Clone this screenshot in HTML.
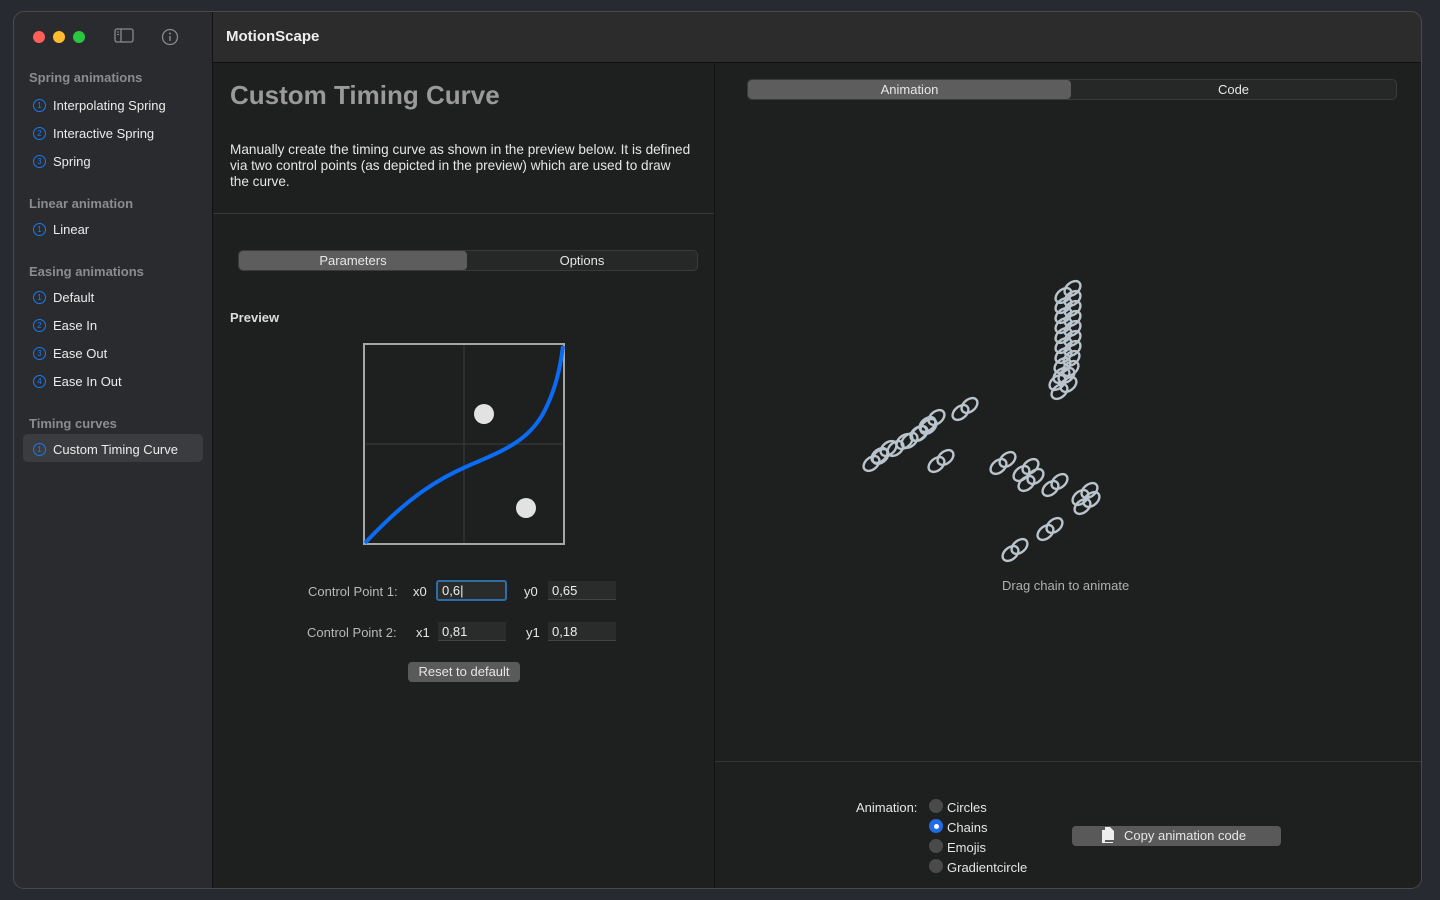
<!DOCTYPE html>
<html><head><meta charset="utf-8"><style>
*{margin:0;padding:0;box-sizing:border-box}
body{width:1440px;height:900px;background:#272a30;font-family:"Liberation Sans",sans-serif;position:relative;overflow:hidden;color:#e6e6e6}
.a{position:absolute}
.win{left:13px;top:11px;width:1409px;height:878px;border-radius:11px;overflow:hidden;background:#1e1f1f}
.frame{left:13px;top:11px;width:1409px;height:878px;border-radius:11px;border:1px solid #4a4a4a;pointer-events:none}
.side{left:0;top:0;width:200px;height:878px;background:#2a2b2e;border-right:1px solid #111}
.tb{left:200px;top:0;width:1209px;height:52px;background:#2c2c2c;border-bottom:1px solid #111}
.hd{font-size:13px;font-weight:bold;color:#8c8c8e;left:16px}
.it{font-size:13px;color:#ececec;left:40px}
.num{position:absolute;left:-20px;top:1px;width:13px;height:13px;border:1.3px solid #1a7bf0;border-radius:50%;font-size:8px;color:#1a7bf0;text-align:center;line-height:11px}
.seg{border:1px solid #3a3a3a;border-radius:5px;background:#262727;height:21px}
.seg .on{position:absolute;left:0;top:0;height:19px;background:#5d5d5d;border-radius:4px}
.lbl{font-size:13px;color:#e6e6e6;text-align:center;position:absolute;top:2px}
.inp{background:#2a2b2b;border-bottom:1px solid #444;height:19px;font-size:13px;padding-left:4px;line-height:19px;color:#eee}
.rad{width:14px;height:14px;border-radius:50%;background:#4a4a4a}
</style></head><body>
<div class="a win">
 <div class="a side">
  <div class="a" style="left:20px;top:20px;width:12px;height:12px;border-radius:50%;background:#fe5f57"></div>
  <div class="a" style="left:40px;top:20px;width:12px;height:12px;border-radius:50%;background:#febc2e"></div>
  <div class="a" style="left:60px;top:20px;width:12px;height:12px;border-radius:50%;background:#28c840"></div>
  <svg class="a" style="left:101px;top:17px" width="20" height="16"><rect x="1" y="1" width="18" height="13" rx="2" fill="none" stroke="#8a8a8a" stroke-width="1.3"/><line x1="7" y1="1" x2="7" y2="14" stroke="#8a8a8a" stroke-width="1.3"/><line x1="3" y1="4" x2="5" y2="4" stroke="#8a8a8a"/><line x1="3" y1="6.5" x2="5" y2="6.5" stroke="#8a8a8a"/></svg>
  <svg class="a" style="left:148px;top:17px" width="18" height="18"><circle cx="9" cy="9" r="7.5" fill="none" stroke="#8a8a8a" stroke-width="1.3"/><circle cx="9" cy="5.5" r="1" fill="#8a8a8a"/><line x1="9" y1="8" x2="9" y2="13" stroke="#8a8a8a" stroke-width="1.4"/></svg>
  <div class="a hd" style="top:59px">Spring animations</div>
  <div class="a it" style="top:87px"><span class="num">1</span>Interpolating Spring</div>
  <div class="a it" style="top:115px"><span class="num">2</span>Interactive Spring</div>
  <div class="a it" style="top:143px"><span class="num">3</span>Spring</div>
  <div class="a hd" style="top:185px">Linear animation</div>
  <div class="a it" style="top:211px"><span class="num">1</span>Linear</div>
  <div class="a hd" style="top:253px">Easing animations</div>
  <div class="a it" style="top:279px"><span class="num">1</span>Default</div>
  <div class="a it" style="top:307px"><span class="num">2</span>Ease In</div>
  <div class="a it" style="top:335px"><span class="num">3</span>Ease Out</div>
  <div class="a it" style="top:363px"><span class="num">4</span>Ease In Out</div>
  <div class="a hd" style="top:405px">Timing curves</div>
  <div class="a" style="left:10px;top:423px;width:180px;height:28px;border-radius:5px;background:#3b3c3f"></div>
  <div class="a it" style="top:431px"><span class="num">1</span>Custom Timing Curve</div>
 </div>
 <div class="a tb"><div class="a" style="left:13px;top:17px;font-size:15px;font-weight:bold;color:#eee">MotionScape</div></div>
 <div class="a" style="left:217px;top:69px;font-size:26px;font-weight:bold;color:#9a9a9a">Custom Timing Curve</div>
 <div class="a" style="left:217px;top:131px;width:480px;font-size:13.6px;line-height:16px;color:#e6e6e6;white-space:nowrap">Manually create the timing curve as shown in the preview below. It is defined<br>via two control points (as depicted in the preview) which are used to draw<br>the curve.</div>
 <div class="a" style="left:200px;top:202px;width:501px;height:1px;background:#3a3a3a"></div>
 <div class="a" style="left:701px;top:52px;width:1px;height:826px;background:#111"></div>
 <div class="a seg" style="left:225px;top:239px;width:460px"><div class="on" style="width:228px"></div><div class="lbl" style="left:0;width:228px">Parameters</div><div class="lbl" style="left:228px;width:230px">Options</div></div>
 <div class="a" style="left:217px;top:299px;font-size:13px;font-weight:bold;color:#ddd">Preview</div>
 <svg class="a" style="left:350px;top:332px" width="204" height="204">
  <rect x="1" y="1" width="200" height="200" fill="#1e1f1f" stroke="#a6a6a6" stroke-width="2"/>
  <line x1="101" y1="2" x2="101" y2="200" stroke="#3c3c3c"/><line x1="2" y1="101" x2="200" y2="101" stroke="#3c3c3c"/>
  <path d="M2,200 C47,152 77,135 107,122 C142,107 167,97 182,67 C192,47 197,27 200,3" fill="none" stroke="#0a6cf5" stroke-width="4"/>
  <circle cx="121" cy="71" r="10" fill="#e2e2e2"/><circle cx="163" cy="165" r="10" fill="#e2e2e2"/>
 </svg>
 <div class="a" style="left:295px;top:573px;font-size:13px;color:#b8b8b8">Control Point 1:</div>
 <div class="a" style="left:400px;top:573px;font-size:13px">x0</div>
 <div class="a inp" style="left:423px;top:569px;width:71px;height:21px;border:2px solid #2c6ea8;border-radius:3px;line-height:17px">0,6|</div>
 <div class="a" style="left:511px;top:573px;font-size:13px">y0</div>
 <div class="a inp" style="left:535px;top:570px;width:68px">0,65</div>
 <div class="a" style="left:294px;top:614px;font-size:13px;color:#b8b8b8">Control Point 2:</div>
 <div class="a" style="left:403px;top:614px;font-size:13px">x1</div>
 <div class="a inp" style="left:425px;top:611px;width:68px">0,81</div>
 <div class="a" style="left:513px;top:614px;font-size:13px">y1</div>
 <div class="a inp" style="left:535px;top:611px;width:68px">0,18</div>
 <div class="a" style="left:395px;top:651px;width:112px;height:20px;background:#5a5a5a;border-radius:4px;font-size:13px;text-align:center;line-height:19px">Reset to default</div>
 <div class="a seg" style="left:734px;top:68px;width:650px"><div class="on" style="width:323px"></div><div class="lbl" style="left:0;width:323px">Animation</div><div class="lbl" style="left:323px;width:325px">Code</div></div>
 <svg class="a" style="left:0;top:0" width="1409" height="878">
  <defs><g id="lk" fill="none" stroke="#b9c4cc" stroke-width="2.4"><ellipse cx="-4.5" cy="3.5" rx="9" ry="6" transform="rotate(-40 -4.5 3.5)"/><ellipse cx="4.5" cy="-3.5" rx="9" ry="6" transform="rotate(-40 4.5 -3.5)"/></g></defs>
  <g transform="translate(-13,-11)">
   <use href="#lk" x="1068" y="292"/><use href="#lk" x="1068" y="302"/><use href="#lk" x="1068" y="312"/><use href="#lk" x="1068" y="322"/><use href="#lk" x="1068" y="332"/><use href="#lk" x="1068" y="342"/><use href="#lk" x="1068" y="352"/><use href="#lk" x="1067" y="362"/><use href="#lk" x="1066" y="372"/><use href="#lk" x="1062" y="379"/><use href="#lk" x="1064" y="388"/>
   <use href="#lk" x="876" y="460"/><use href="#lk" x="884" y="452"/><use href="#lk" x="900" y="445"/><use href="#lk" x="914" y="437"/><use href="#lk" x="924" y="430"/><use href="#lk" x="932" y="421"/><use href="#lk" x="965" y="409"/><use href="#lk" x="941" y="461"/>
   <use href="#lk" x="1003" y="463"/><use href="#lk" x="1026" y="470"/><use href="#lk" x="1031" y="480"/><use href="#lk" x="1055" y="485"/><use href="#lk" x="1085" y="494"/><use href="#lk" x="1087" y="503"/><use href="#lk" x="1050" y="529"/><use href="#lk" x="1015" y="550"/>
  </g>
 </svg>
 <div class="a" style="left:989px;top:567px;font-size:13px;color:#b0b0b0">Drag chain to animate</div>
 <div class="a" style="left:702px;top:750px;width:707px;height:1px;background:#333"></div>
 <div class="a" style="left:843px;top:789px;font-size:13px">Animation:</div>
 <div class="a rad" style="left:916px;top:788px"></div><div class="a" style="left:934px;top:789px;font-size:13px">Circles</div>
 <div class="a rad" style="left:916px;top:808px;background:#1f6ce8"><div class="a" style="left:5px;top:5px;width:5px;height:5px;border-radius:50%;background:#fff"></div></div><div class="a" style="left:934px;top:809px;font-size:13px">Chains</div>
 <div class="a rad" style="left:916px;top:828px"></div><div class="a" style="left:934px;top:829px;font-size:13px">Emojis</div>
 <div class="a rad" style="left:916px;top:848px"></div><div class="a" style="left:934px;top:849px;font-size:13px">Gradientcircle</div>
 <div class="a" style="left:1059px;top:815px;width:209px;height:20px;background:#595959;border-radius:4px;font-size:13px;line-height:19px;padding-left:52px">Copy animation code</div>
 <svg class="a" style="left:1088px;top:815px" width="14" height="18"><path d="M4 1h5l4 4v9H4z" fill="#eee"/><path d="M1 4h3v12h8v1H1z" fill="#eee"/></svg>
</div>
<div class="a frame"></div>
</body></html>
